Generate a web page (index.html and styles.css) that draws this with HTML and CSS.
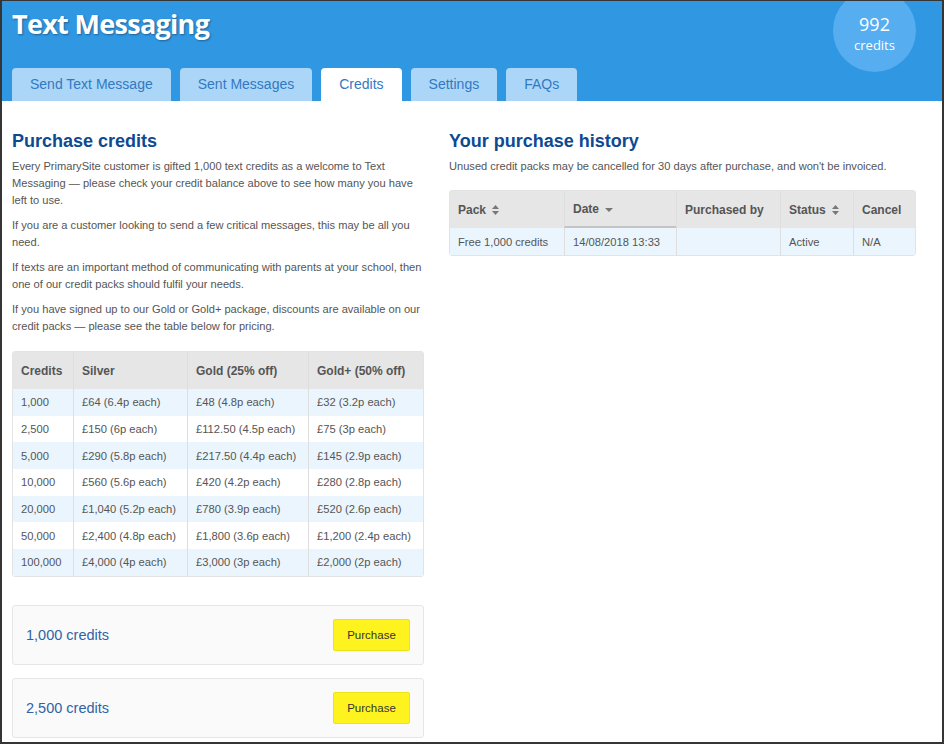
FILE: index.html
```html
<!DOCTYPE html>
<html lang="en">
<head>
    <meta charset="UTF-8">
    <title>Text Messaging - Credits</title>
    <link rel="stylesheet" href="styles.css">
</head>
<body>
<div class="frame">
    <div class="header">
        <h1>Text Messaging</h1>
        <div class="balance">
            <span class="balance-num">992</span>
            <span class="balance-label">credits</span>
        </div>
        <ul class="tabs">
            <li>Send Text Message</li>
            <li>Sent Messages</li>
            <li class="active">Credits</li>
            <li>Settings</li>
            <li>FAQs</li>
        </ul>
    </div>

    <div class="content">
        <div class="col-left">
            <h2>Purchase credits</h2>
            <p>Every PrimarySite customer is gifted 1,000 text credits as a welcome to Text Messaging — please check your credit balance above to see how many you have left to use.</p>
            <p>If you are a customer looking to send a few critical messages, this may be all you need.</p>
            <p>If texts are an important method of communicating with parents at your school, then one of our credit packs should fulfil your needs.</p>
            <p>If you have signed up to our Gold or Gold+ package, discounts are available on our credit packs — please see the table below for pricing.</p>

            <table class="grid prices">
                <thead>
                    <tr><th class="c1">Credits</th><th class="c2">Silver</th><th class="c3">Gold (25% off)</th><th>Gold+ (50% off)</th></tr>
                </thead>
                <tbody>
                    <tr><td>1,000</td><td>£64 (6.4p each)</td><td>£48 (4.8p each)</td><td>£32 (3.2p each)</td></tr>
                    <tr><td>2,500</td><td>£150 (6p each)</td><td>£112.50 (4.5p each)</td><td>£75 (3p each)</td></tr>
                    <tr><td>5,000</td><td>£290 (5.8p each)</td><td>£217.50 (4.4p each)</td><td>£145 (2.9p each)</td></tr>
                    <tr><td>10,000</td><td>£560 (5.6p each)</td><td>£420 (4.2p each)</td><td>£280 (2.8p each)</td></tr>
                    <tr><td>20,000</td><td>£1,040 (5.2p each)</td><td>£780 (3.9p each)</td><td>£520 (2.6p each)</td></tr>
                    <tr><td>50,000</td><td>£2,400 (4.8p each)</td><td>£1,800 (3.6p each)</td><td>£1,200 (2.4p each)</td></tr>
                    <tr><td>100,000</td><td>£4,000 (4p each)</td><td>£3,000 (3p each)</td><td>£2,000 (2p each)</td></tr>
                </tbody>
            </table>

            <div class="pack">
                <span class="pack-name">1,000 credits</span>
                <button class="buy">Purchase</button>
            </div>
            <div class="pack">
                <span class="pack-name">2,500 credits</span>
                <button class="buy">Purchase</button>
            </div>
        </div>

        <div class="col-right">
            <h2>Your purchase history</h2>
            <p class="note">Unused credit packs may be cancelled for 30 days after purchase, and won't be invoiced.</p>

            <table class="grid history">
                <thead>
                    <tr>
                        <th class="h1">Pack <svg class="sort" width="7" height="10" viewBox="0 0 7 10"><path d="M3.5 0L7 4H0z M3.5 10L0 6h7z" fill="#777"/></svg></th>
                        <th class="h2 sorted">Date <svg class="sort" width="8" height="10" viewBox="0 0 8 10"><path d="M0 4h8L4 8z" fill="#777"/></svg></th>
                        <th class="h3">Purchased by</th>
                        <th class="h4">Status <svg class="sort" width="7" height="10" viewBox="0 0 7 10"><path d="M3.5 0L7 4H0z M3.5 10L0 6h7z" fill="#777"/></svg></th>
                        <th>Cancel</th>
                    </tr>
                </thead>
                <tbody>
                    <tr><td>Free 1,000 credits</td><td>14/08/2018 13:33</td><td></td><td>Active</td><td>N/A</td></tr>
                </tbody>
            </table>
        </div>
    </div>
</div>
</body>
</html>
```

FILE: styles.css
```css
body {
    margin: 0;
    font-family: "Liberation Sans", Arial, sans-serif;
    color: #555;
}
.frame {
    width: 944px;
    height: 744px;
    box-sizing: border-box;
    border: solid #353535;
    border-width: 1px 2px 2px 2px;
    overflow: hidden;
    background: #fff;
}
.header {
    position: relative;
    height: 100px;
    background: #3097e3;
    display: flex;
    flex-direction: column;
    justify-content: space-between;
    padding-left: 10px;
    overflow: hidden;
}
.header h1 {
    margin: 4px 0 0;
    font-family: "Open Sans", sans-serif;
    font-size: 27px;
    font-weight: 700;
    letter-spacing: -0.7px;
    color: #fff;
    text-shadow: 1px 1px 2px rgba(0, 0, 0, 0.35);
}
.balance {
    position: absolute;
    top: -12px;
    right: 26px;
    width: 83px;
    height: 83px;
    border-radius: 50%;
    background: #56adf0;
    color: #fff;
    font-family: "Open Sans", sans-serif;
    display: flex;
    flex-direction: column;
    align-items: center;
    justify-content: center;
    padding-top: 6px;
    box-sizing: border-box;
}
.balance-num {
    font-size: 18px;
    line-height: 20px;
}
.balance-label {
    margin-top: 3.5px;
    font-size: 13px;
    line-height: 16px;
}
.tabs {
    list-style: none;
    margin: 0;
    padding: 0;
    display: flex;
    gap: 9px;
}
.tabs li {
    height: 33px;
    line-height: 33px;
    padding: 0 18px;
    background: #acd6f7;
    border-radius: 4px 4px 0 0;
    color: #3279c2;
    font-size: 14px;
}
.tabs li.active {
    background: #fff;
}
.content {
    display: grid;
    grid-template-columns: 412px 467px;
    gap: 25px;
    padding-left: 10px;
}
h2 {
    margin: 29px 0 6px;
    font-size: 18px;
    line-height: 22px;
    color: #0d4a92;
}
p {
    margin: 0 0 8px;
    font-size: 11.1px;
    line-height: 17px;
}
.grid {
    width: 100%;
    border-collapse: separate;
    border-spacing: 0;
    border: 1px solid #e3e3e3;
    border-radius: 3px;
    font-size: 11.2px;
}
.grid th {
    background: #e6e6e6;
    text-align: left;
    font-size: 12px;
    font-weight: 700;
    height: 37px;
    padding: 0 8px;
    color: #555;
}
.grid td {
    padding: 0 8px;
}
.grid th + th,
.grid td + td {
    border-left: 1px solid #dedede;
}
.grid tbody tr:nth-child(odd) td {
    background: #ebf5fd;
}
.prices {
    margin-top: 16px;
}
.prices td {
    height: 26.7px;
}
.prices .c1 { width: 44px; }
.prices .c2 { width: 97px; }
.prices .c3 { width: 104px; }
.pack {
    display: flex;
    align-items: center;
    justify-content: space-between;
    height: 58px;
    margin-top: 13px;
    padding: 0 13px;
    background: #fafafa;
    border: 1px solid #e6e6e6;
    border-radius: 3px;
}
.prices + .pack {
    margin-top: 28px;
}
.pack-name {
    font-size: 14.5px;
    color: #2f63a8;
}
.buy {
    width: 77px;
    height: 32px;
    background: #fff31f;
    border: 1px solid #ece21a;
    border-radius: 2px;
    font-family: "Liberation Sans", Arial, sans-serif;
    font-size: 11.5px;
    color: #333;
}
.note {
    font-size: 11.1px;
}
.history {
    margin-top: 15px;
}
.history td {
    height: 27px;
}
.history .h1 { width: 98px; }
.history .h2 { width: 95px; }
.history .h3 { width: 87px; }
.history .h4 { width: 56px; }
.history th.sorted {
    border-bottom: 2px solid #c4c4c4;
    height: 35px;
}
.sort {
    margin-left: 3px;
    vertical-align: -1px;
}
```
